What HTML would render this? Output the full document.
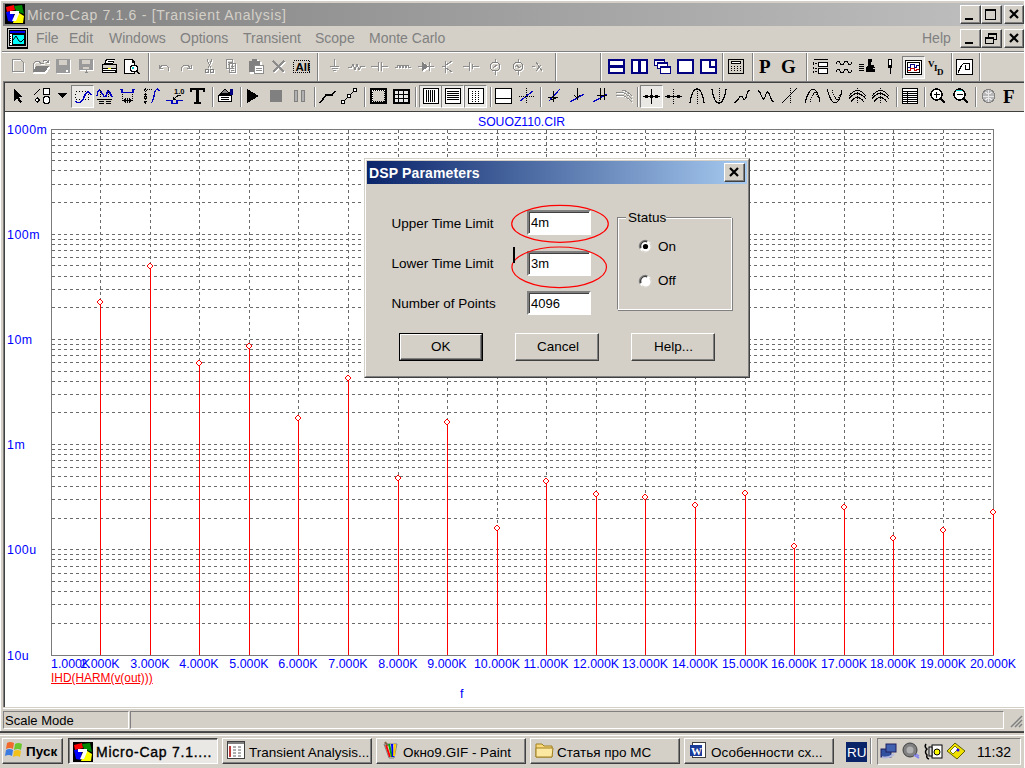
<!DOCTYPE html><html><head><meta charset="utf-8"><style>
*{margin:0;padding:0;box-sizing:border-box}
body{width:1025px;height:768px;overflow:hidden;background:#D4D0C8;position:relative;font-family:"Liberation Sans",sans-serif}
.ab{position:absolute}
.t{position:absolute;white-space:nowrap;line-height:1}
svg{position:absolute;overflow:visible}
.raised{border-style:solid;border-width:1px;border-color:#fff #404040 #404040 #fff;box-shadow:inset -1px -1px #808080}
.sunk{border-style:solid;border-width:1px;border-color:#808080 #fff #fff #808080;box-shadow:inset 1px 1px #404040, inset -1px -1px #D4D0C8}
</style></head><body>

<div class="ab" style="left:0;top:0;width:1025px;height:1px;background:#fff"></div>
<div class="ab" style="left:0;top:0;width:1px;height:731px;background:#fff"></div>
<div class="ab" style="left:3px;top:3px;width:1020px;height:23px;background:linear-gradient(to right,#808080,#C0C0C0)"></div>
<div class="t" style="left:27px;top:8.2px;font-size:14px;letter-spacing:0.7px;color:#D4D0C8">Micro-Cap 7.1.6 - [Transient Analysis]</div>
<svg class="ab" style="left:5px;top:4px" width="20" height="20" viewBox="0 0 20 20">
<rect x="0" y="0" width="20" height="20" fill="#000"/>
<polygon points="1,3 9,1 10,6 2,8" fill="#f00"/>
<polygon points="9,2 17,1 19,10 11,7" fill="#080"/>
<polygon points="1,8 9,7 8,18 3,17" fill="#00f"/>
<polygon points="11,7 19,12 18,19 8,19" fill="#ff0"/>
<polygon points="5,7 14,7 14,10 11,17 7,17 10,10 5,10" fill="#fff"/>
</svg>
<div class="ab raised" style="left:960px;top:5px;width:21px;height:19px;background:#D4D0C8"></div><div class="ab" style="left:965px;top:18px;width:8px;height:2px;background:#000"></div>
<div class="ab raised" style="left:981px;top:5px;width:21px;height:19px;background:#D4D0C8"></div><div class="ab" style="left:985px;top:9px;width:11px;height:11px;border:1px solid #000;border-top-width:2px"></div>
<div class="ab raised" style="left:1004px;top:5px;width:20px;height:19px;background:#D4D0C8"></div><svg style="left:1009px;top:9px" width="12" height="11"><path d="M1 1L9 9M9 1L1 9" stroke="#000" stroke-width="2.2"/></svg>
<svg class="ab" style="left:7px;top:28px" width="21" height="21" viewBox="0 0 21 21" shape-rendering="crispEdges">
<rect x="0" y="0" width="21" height="21" fill="#000"/>
<rect x="1" y="1" width="19" height="18" fill="#C8C8C8"/>
<rect x="2" y="2" width="17" height="16" fill="#000"/>
<rect x="3" y="3" width="15" height="2" fill="#0000F0"/>
<rect x="3" y="6" width="2" height="11" fill="#fff"/>
<path d="M3 8h1M3 10h1M3 12h1M3 14h1" stroke="#000"/>
<rect x="6" y="7" width="11" height="9" fill="#0ff"/>
<path d="M6 12L9 8L12 13L14 14L17 11" stroke="#000" fill="none" shape-rendering="auto"/>
</svg>
<div class="t" style="left:36px;top:31px;font-size:14px;color:#808080">File</div>
<div class="t" style="left:69px;top:31px;font-size:14px;color:#808080">Edit</div>
<div class="t" style="left:109px;top:31px;font-size:14px;color:#808080">Windows</div>
<div class="t" style="left:180px;top:31px;font-size:14px;color:#808080">Options</div>
<div class="t" style="left:243px;top:31px;font-size:14px;color:#808080">Transient</div>
<div class="t" style="left:315px;top:31px;font-size:14px;color:#808080">Scope</div>
<div class="t" style="left:369px;top:31px;font-size:14px;color:#808080">Monte Carlo</div>
<div class="t" style="left:922px;top:31px;font-size:14px;color:#808080">Help</div>
<div class="ab raised" style="left:960px;top:29px;width:21px;height:19px;background:#D4D0C8"></div><div class="ab" style="left:965px;top:42px;width:8px;height:2px;background:#000"></div>
<div class="ab raised" style="left:981px;top:29px;width:21px;height:19px;background:#D4D0C8"></div><div class="ab" style="left:988px;top:33px;width:9px;height:7px;border:1px solid #000;border-top-width:2px"></div><div class="ab" style="left:985px;top:37px;width:9px;height:7px;border:1px solid #000;border-top-width:2px;background:#D4D0C8"></div>
<div class="ab raised" style="left:1004px;top:29px;width:20px;height:19px;background:#D4D0C8"></div><svg style="left:1009px;top:33px" width="12" height="11"><path d="M1 1L9 9M9 1L1 9" stroke="#000" stroke-width="2.2"/></svg>
<div class="ab" style="left:2px;top:51px;width:1023px;height:1px;background:#808080"></div>
<div class="ab" style="left:2px;top:52px;width:1023px;height:1px;background:#fff"></div>
<div class="ab" style="left:3px;top:81px;width:1022px;height:1px;background:#808080"></div>
<div class="ab" style="left:4px;top:82px;width:1021px;height:1px;background:#404040"></div>
<div class="ab" style="left:3px;top:81px;width:1px;height:626px;background:#808080"></div>
<div class="ab" style="left:4px;top:82px;width:1px;height:625px;background:#404040"></div>
<div class="ab" style="left:5px;top:111px;width:1020px;height:1px;background:#404040"></div>
<div class="ab" style="left:5px;top:112px;width:1020px;height:595px;background:#fff"></div>
<div class="ab" style="left:3px;top:708px;width:1022px;height:1px;background:#fff"></div>
<div class="ab" style="left:148px;top:53px;width:1px;height:28px;background:#808080"></div><div class="ab" style="left:149px;top:53px;width:1px;height:28px;background:#fff"></div>
<div class="ab" style="left:317px;top:53px;width:1px;height:28px;background:#808080"></div><div class="ab" style="left:318px;top:53px;width:1px;height:28px;background:#fff"></div>
<div class="ab" style="left:555px;top:53px;width:1px;height:28px;background:#808080"></div><div class="ab" style="left:556px;top:53px;width:1px;height:28px;background:#fff"></div>
<div class="ab" style="left:600px;top:53px;width:1px;height:28px;background:#808080"></div><div class="ab" style="left:601px;top:53px;width:1px;height:28px;background:#fff"></div>
<div class="ab" style="left:722px;top:53px;width:1px;height:28px;background:#808080"></div><div class="ab" style="left:723px;top:53px;width:1px;height:28px;background:#fff"></div>
<div class="ab" style="left:752px;top:53px;width:1px;height:28px;background:#808080"></div><div class="ab" style="left:753px;top:53px;width:1px;height:28px;background:#fff"></div>
<div class="ab" style="left:806px;top:53px;width:1px;height:28px;background:#808080"></div><div class="ab" style="left:807px;top:53px;width:1px;height:28px;background:#fff"></div>
<div class="ab" style="left:951px;top:53px;width:1px;height:28px;background:#808080"></div><div class="ab" style="left:952px;top:53px;width:1px;height:28px;background:#fff"></div>
<div class="ab" style="left:979px;top:53px;width:1px;height:28px;background:#808080"></div><div class="ab" style="left:980px;top:53px;width:1px;height:28px;background:#fff"></div>
<div class="ab" style="left:212px;top:87px;width:1px;height:20px;background:#808080"></div><div class="ab" style="left:213px;top:87px;width:1px;height:20px;background:#fff"></div>
<div class="ab" style="left:240px;top:87px;width:1px;height:20px;background:#808080"></div><div class="ab" style="left:241px;top:87px;width:1px;height:20px;background:#fff"></div>
<div class="ab" style="left:314px;top:87px;width:1px;height:20px;background:#808080"></div><div class="ab" style="left:315px;top:87px;width:1px;height:20px;background:#fff"></div>
<div class="ab" style="left:364px;top:87px;width:1px;height:20px;background:#808080"></div><div class="ab" style="left:365px;top:87px;width:1px;height:20px;background:#fff"></div>
<div class="ab" style="left:415px;top:87px;width:1px;height:20px;background:#808080"></div><div class="ab" style="left:416px;top:87px;width:1px;height:20px;background:#fff"></div>
<div class="ab" style="left:490px;top:87px;width:1px;height:20px;background:#808080"></div><div class="ab" style="left:491px;top:87px;width:1px;height:20px;background:#fff"></div>
<div class="ab" style="left:540px;top:87px;width:1px;height:20px;background:#808080"></div><div class="ab" style="left:541px;top:87px;width:1px;height:20px;background:#fff"></div>
<div class="ab" style="left:637px;top:87px;width:1px;height:20px;background:#808080"></div><div class="ab" style="left:638px;top:87px;width:1px;height:20px;background:#fff"></div>
<div class="ab" style="left:896px;top:87px;width:1px;height:20px;background:#808080"></div><div class="ab" style="left:897px;top:87px;width:1px;height:20px;background:#fff"></div>
<div class="ab" style="left:924px;top:87px;width:1px;height:20px;background:#808080"></div><div class="ab" style="left:925px;top:87px;width:1px;height:20px;background:#fff"></div>
<div class="ab" style="left:975px;top:87px;width:1px;height:20px;background:#808080"></div><div class="ab" style="left:976px;top:87px;width:1px;height:20px;background:#fff"></div>
<svg style="left:12px;top:59px" width="14" height="15" viewBox="0 0 14 15" shape-rendering="crispEdges"><g transform="translate(1,1)" fill="#fff" stroke="#fff"><path d="M0.5 0.5H8.5L11.5 3.5V12.5H0.5Z" fill="none" stroke="#fff" stroke-width="1"/></g><g><path d="M0.5 0.5H8.5L11.5 3.5V12.5H0.5Z" fill="none" stroke="#8C8C8C" stroke-width="1"/></g></svg>
<svg style="left:33px;top:59px" width="17" height="15" viewBox="0 0 17 15" shape-rendering="crispEdges"><g transform="translate(1,1)" fill="#fff" stroke="#fff"><path d="M0.5 12.5V4.5l2-2h4l1 2h3" fill="none" stroke="#fff" stroke-width="1"/><path d="M3 7h13l-4 6H0z" fill="#fff"/><path d="M10 2.5Q12 0 15 2.5M15 1v2h-2" fill="none" stroke="#fff" stroke-width="1"/></g><g><path d="M0.5 12.5V4.5l2-2h4l1 2h3" fill="none" stroke="#8C8C8C" stroke-width="1"/><path d="M3 7h13l-4 6H0z" fill="#808080"/><path d="M10 2.5Q12 0 15 2.5M15 1v2h-2" fill="none" stroke="#8C8C8C" stroke-width="1"/></g></svg>
<svg style="left:56px;top:59px" width="15" height="15" viewBox="0 0 15 15" shape-rendering="crispEdges"><path d="M1 1h14v14H1z" fill="#fff"/><path d="M0 0h14v14H0z" fill="#9A9A9A"/><path d="M3 1h8v5H3z" fill="#D4D0C8"/><path d="M10 11h2v2h-2z" fill="#fff"/></svg>
<svg style="left:79px;top:59px" width="16" height="16" viewBox="0 0 16 16" shape-rendering="crispEdges"><path d="M1 1h14v11H1z" fill="#fff"/><path d="M0 0h14v11H0z" fill="#9A9A9A"/><path d="M3 1h8v4H3z" fill="#D4D0C8"/><path d="M4 8h6v2H4z" fill="#D4D0C8"/><path d="M7 11v3M5.5 13.5h3" fill="none" stroke="#8C8C8C" stroke-width="1"/></svg>
<svg style="left:101px;top:59px" width="17" height="15" viewBox="0 0 17 15" shape-rendering="crispEdges"><path d="M5 0h9l-2 5H3z" fill="#000"/><path d="M6 1h7l-1 3H5z" fill="#fff"/><path d="M6.5 2.5h5" fill="none" stroke="#000" stroke-width="1"/><path d="M1 5h15v9H1z" fill="#000"/><path d="M2 6h13v3H2z" fill="#D4D0C8"/><path d="M2 10h13v1H2z" fill="#fff"/><path d="M7 9h3v1H7z" fill="#ff0"/><path d="M2 12h12v1H2z" fill="#fff"/></svg>
<svg style="left:124px;top:59px" width="17" height="16" viewBox="0 0 17 16" shape-rendering="crispEdges"><path d="M0 0h8l3 3v12H0z" fill="#000"/><path d="M1 1h7v3h2v10H1z" fill="#fff"/><circle cx="10" cy="9.5" r="3.5" fill="#fff" stroke="#000"/><path d="M8 8h2v2H8z" fill="#0cc"/><path d="M12.5 12l3 3" fill="none" stroke="#000" stroke-width="2"/></svg>
<svg style="left:157px;top:62px" width="14" height="11" viewBox="0 0 14 11" shape-rendering="crispEdges"><g transform="translate(1,1)" fill="#fff" stroke="#fff"><path d="M2 2.5v4h4 M2.5 6.5Q5 2 9 3.5Q13 5 11 9" fill="none" stroke="#fff" stroke-width="1"/></g><g><path d="M2 2.5v4h4 M2.5 6.5Q5 2 9 3.5Q13 5 11 9" fill="none" stroke="#8C8C8C" stroke-width="1"/></g></svg>
<svg style="left:180px;top:62px" width="14" height="11" viewBox="0 0 14 11" shape-rendering="crispEdges"><g transform="translate(1,1)" fill="#fff" stroke="#fff"><path d="M11 2.5v4h-4 M10.5 6.5Q8 2 4 3.5Q0 5 2 9" fill="none" stroke="#fff" stroke-width="1"/></g><g><path d="M11 2.5v4h-4 M10.5 6.5Q8 2 4 3.5Q0 5 2 9" fill="none" stroke="#8C8C8C" stroke-width="1"/></g></svg>
<svg style="left:204px;top:59px" width="12" height="16" viewBox="0 0 12 16" shape-rendering="crispEdges"><g transform="translate(1,1)" fill="#fff" stroke="#fff"><path d="M3 0.5L7 9M8 0.5L4 9" fill="none" stroke="#fff" stroke-width="1"/><circle cx="3" cy="12" r="2" fill="none" stroke="#fff"/><circle cx="8" cy="12" r="2" fill="none" stroke="#fff"/></g><g><path d="M3 0.5L7 9M8 0.5L4 9" fill="none" stroke="#8C8C8C" stroke-width="1"/><circle cx="3" cy="12" r="2" fill="none" stroke="#808080"/><circle cx="8" cy="12" r="2" fill="none" stroke="#808080"/></g></svg>
<svg style="left:226px;top:59px" width="16" height="16" viewBox="0 0 16 16" shape-rendering="crispEdges"><g transform="translate(1,1)" fill="#fff" stroke="#fff"><path d="M0.5 0.5h6v9h-6z M3.5 4.5h6v9h-6z M1.5 3h4M1.5 5h1 M5 7h3M5 9h3M5 11h3" fill="none" stroke="#fff" stroke-width="1"/></g><g><path d="M0.5 0.5h6v9h-6z M3.5 4.5h6v9h-6z M1.5 3h4M1.5 5h1 M5 7h3M5 9h3M5 11h3" fill="none" stroke="#8C8C8C" stroke-width="1"/></g></svg>
<svg style="left:249px;top:59px" width="17" height="16" viewBox="0 0 17 16" shape-rendering="crispEdges"><g transform="translate(1,1)" fill="#fff" stroke="#fff"><path d="M0 2h11v11H0z" fill="#fff"/><path d="M3 0h5v3H3z" fill="#fff"/></g><g><path d="M0 2h11v11H0z" fill="#808080"/><path d="M3 0h5v3H3z" fill="#808080"/></g><path d="M6 7h9v8H6z" fill="#fff"/><path d="M5.5 6.5h9v8h-9z M7 9h6M7 11h6" fill="none" stroke="#8C8C8C" stroke-width="1"/></svg>
<svg style="left:272px;top:60px" width="14" height="14" viewBox="0 0 14 14" shape-rendering="crispEdges"><g transform="translate(1,1)" fill="#fff" stroke="#fff"><path d="M1 1L12 12M12 1L1 12" fill="none" stroke="#fff" stroke-width="1.6"/></g><g><path d="M1 1L12 12M12 1L1 12" fill="none" stroke="#8C8C8C" stroke-width="1.6"/></g></svg>
<svg style="left:293px;top:60px" width="18" height="14" viewBox="0 0 18 14" shape-rendering="crispEdges"><rect x="0.5" y="0.5" width="16" height="12" fill="none" stroke="#000" stroke-dasharray="1 1"/><text x="2.5" y="11" font-family="Liberation Sans" font-weight="bold" font-size="11.5" fill="#000">All</text></svg>
<svg style="left:330px;top:59px" width="10" height="16" viewBox="0 0 10 16" shape-rendering="crispEdges"><g transform="translate(1,1)" fill="#fff" stroke="#fff"><path d="M4.5 0v7M0 7.5h9M1.5 9.5h6M3 11.5h3" fill="none" stroke="#fff" stroke-width="1"/></g><g><path d="M4.5 0v7M0 7.5h9M1.5 9.5h6M3 11.5h3" fill="none" stroke="#8C8C8C" stroke-width="1"/></g></svg>
<svg style="left:348px;top:59px" width="18" height="16" viewBox="0 0 18 16" shape-rendering="crispEdges"><g transform="translate(1,1)" fill="#fff" stroke="#fff"><path d="M0 8.5h3l2-3 2 5 2-5 2 5 2-3h4" fill="none" stroke="#fff" stroke-width="1"/></g><g><path d="M0 8.5h3l2-3 2 5 2-5 2 5 2-3h4" fill="none" stroke="#8C8C8C" stroke-width="1"/></g></svg>
<svg style="left:371px;top:59px" width="18" height="16" viewBox="0 0 18 16" shape-rendering="crispEdges"><g transform="translate(1,1)" fill="#fff" stroke="#fff"><path d="M0 7.5h7M7.5 3v9M10.5 3v9M11 7.5h6" fill="none" stroke="#fff" stroke-width="1"/></g><g><path d="M0 7.5h7M7.5 3v9M10.5 3v9M11 7.5h6" fill="none" stroke="#8C8C8C" stroke-width="1"/></g></svg>
<svg style="left:395px;top:59px" width="16" height="16" viewBox="0 0 16 16" shape-rendering="crispEdges"><g transform="translate(1,1)" fill="#fff" stroke="#fff"><path d="M0 8.5h2 Q3.5 4 5 8.5 Q6.5 4 8 8.5 Q9.5 4 11 8.5 Q12.5 4 14 8.5h2" fill="none" stroke="#fff" stroke-width="1"/></g><g><path d="M0 8.5h2 Q3.5 4 5 8.5 Q6.5 4 8 8.5 Q9.5 4 11 8.5 Q12.5 4 14 8.5h2" fill="none" stroke="#8C8C8C" stroke-width="1"/></g></svg>
<svg style="left:418px;top:59px" width="16" height="16" viewBox="0 0 16 16" shape-rendering="crispEdges"><g transform="translate(1,1)" fill="#fff" stroke="#fff"><path d="M0 7.5h16M11.5 3v9" fill="none" stroke="#fff" stroke-width="1"/><path d="M4 3L11 7.5L4 12Z" fill="#fff"/></g><g><path d="M0 7.5h16M11.5 3v9" fill="none" stroke="#8C8C8C" stroke-width="1"/><path d="M4 3L11 7.5L4 12Z" fill="#808080"/></g></svg>
<svg style="left:442px;top:59px" width="12" height="16" viewBox="0 0 12 16" shape-rendering="crispEdges"><g transform="translate(1,1)" fill="#fff" stroke="#fff"><path d="M3.5 2v12M0 7.5h3M4 6l6-4M4 9l6 4" fill="none" stroke="#fff" stroke-width="1"/></g><g><path d="M3.5 2v12M0 7.5h3M4 6l6-4M4 9l6 4" fill="none" stroke="#8C8C8C" stroke-width="1"/></g></svg>
<svg style="left:463px;top:59px" width="17" height="16" viewBox="0 0 17 16" shape-rendering="crispEdges"><g transform="translate(1,1)" fill="#fff" stroke="#fff"><path d="M0 7.5h6M6.5 3v9M9.5 5v5M10 7.5h6" fill="none" stroke="#fff" stroke-width="1"/></g><g><path d="M0 7.5h6M6.5 3v9M9.5 5v5M10 7.5h6" fill="none" stroke="#8C8C8C" stroke-width="1"/></g></svg>
<svg style="left:489px;top:59px" width="12" height="16" viewBox="0 0 12 16" shape-rendering="crispEdges"><g transform="translate(1,1)" fill="#fff" stroke="#fff"><circle cx="6" cy="7.5" r="4.5" fill="none" stroke="#fff"/><path d="M6 0v3M6 12v4M4 9l4-3" fill="none" stroke="#fff" stroke-width="1"/></g><g><circle cx="6" cy="7.5" r="4.5" fill="none" stroke="#808080"/><path d="M6 0v3M6 12v4M4 9l4-3" fill="none" stroke="#8C8C8C" stroke-width="1"/></g></svg>
<svg style="left:512px;top:59px" width="12" height="16" viewBox="0 0 12 16" shape-rendering="crispEdges"><g transform="translate(1,1)" fill="#fff" stroke="#fff"><circle cx="6" cy="7.5" r="4.5" fill="none" stroke="#fff"/><path d="M6 0v3M6 12v4M3.5 8Q5 5 6 7.5Q7 10 8.5 7" fill="none" stroke="#fff" stroke-width="1"/></g><g><circle cx="6" cy="7.5" r="4.5" fill="none" stroke="#808080"/><path d="M6 0v3M6 12v4M3.5 8Q5 5 6 7.5Q7 10 8.5 7" fill="none" stroke="#8C8C8C" stroke-width="1"/></g></svg>
<svg style="left:532px;top:59px" width="12" height="16" viewBox="0 0 12 16" shape-rendering="crispEdges"><g transform="translate(1,1)" fill="#fff" stroke="#fff"><path d="M0 7.5h3M4 3l6 9M4 12l5-6" fill="none" stroke="#fff" stroke-width="1"/></g><g><path d="M0 7.5h3M4 3l6 9M4 12l5-6" fill="none" stroke="#8C8C8C" stroke-width="1"/></g></svg>
<svg style="left:608px;top:59px" width="17" height="15" viewBox="0 0 17 15" shape-rendering="crispEdges"><path d="M0 0h17v15H0z" fill="#000080"/><path d="M2 2h13v11H2z" fill="#fff"/><path d="M2 6h13v3H2z" fill="#000080"/></svg>
<svg style="left:631px;top:59px" width="17" height="15" viewBox="0 0 17 15" shape-rendering="crispEdges"><path d="M0 0h17v15H0z" fill="#000080"/><path d="M2 2h13v11H2z" fill="#fff"/><path d="M7 2h3v11H7z" fill="#000080"/></svg>
<svg style="left:654px;top:59px" width="17" height="15" viewBox="0 0 17 15" shape-rendering="crispEdges"><path d="M0 0h11v7H0z" fill="#000080"/><path d="M1 2h9v4H1z" fill="#fff"/><path d="M3 3h11v7H3z" fill="#000080"/><path d="M4 5h9v4H4z" fill="#fff"/><path d="M6 7h11v8H6z" fill="#000080"/><path d="M7 9h9v5H7z" fill="#fff"/></svg>
<svg style="left:677px;top:59px" width="17" height="15" viewBox="0 0 17 15" shape-rendering="crispEdges"><path d="M0 0h17v15H0z" fill="#000080"/><path d="M2 2h13v11H2z" fill="#fff"/></svg>
<svg style="left:700px;top:59px" width="17" height="15" viewBox="0 0 17 15" shape-rendering="crispEdges"><path d="M0 0h17v15H0z" fill="#000080"/><path d="M2 2h13v11H2z" fill="#fff"/><path d="M9 7h6v2H9z M9 2h2v7H9z" fill="#000080"/></svg>
<svg style="left:728px;top:59px" width="16" height="15" viewBox="0 0 16 15" shape-rendering="crispEdges"><path d="M0 0h16v15H0z" fill="#000"/><path d="M1 1h14v13H1z" fill="#D4D0C8"/><path d="M3 2h10v3H3z" fill="#000"/><path d="M4 3h8v1H4z" fill="#fff"/><path d="M3 7.5h1M6 7.5h1M9 7.5h1M12 7.5h1M3 9.5h1M6 9.5h1M9 9.5h1M12 9.5h1M3 11.5h1M6 11.5h1M9 11.5h1M12 11.5h1" fill="none" stroke="#000" stroke-width="1"/></svg>
<svg style="left:758px;top:58px" width="16" height="17" viewBox="0 0 16 17" shape-rendering="crispEdges"><text x="1" y="15" font-family="Liberation Serif" font-weight="bold" font-size="19" fill="#000">P</text></svg>
<svg style="left:780px;top:58px" width="17" height="17" viewBox="0 0 17 17" shape-rendering="crispEdges"><text x="1" y="15" font-family="Liberation Serif" font-weight="bold" font-size="19" fill="#000">G</text></svg>
<svg style="left:813px;top:59px" width="16" height="15" viewBox="0 0 16 15" shape-rendering="crispEdges"><path d="M1 0.5h14" fill="none" stroke="#000" stroke-width="1"/><path d="M0.5 3v3M0.5 8v2M0.5 12v2" fill="none" stroke="#000" stroke-width="1"/><path d="M5 3h10v5H5z" fill="#000"/><path d="M6 4h8v3H6z" fill="#fff"/><path d="M5 9h10v6H5z" fill="#000"/><path d="M6 10h8v4H6z" fill="#fff"/><path d="M2 4.5h2M2 9.5h2M2 12.5h2" fill="none" stroke="#000" stroke-width="1"/></svg>
<svg style="left:836px;top:59px" width="17" height="15" viewBox="0 0 17 15" shape-rendering="crispEdges"><path d="M0 5 Q2 0 4 4 Q6 8 8 4 Q10 0 12 4 Q14 8 16 3 M0 13 Q2 8 4 12 Q6 16 8 12 Q10 8 12 12 Q14 16 16 11" fill="none" stroke="#000" stroke-width="1"/></svg>
<svg style="left:859px;top:59px" width="16" height="15" viewBox="0 0 16 15" shape-rendering="crispEdges"><path d="M9 0h4v3h-1v3h3l1 3h-2v1h2v3H7V8l2-2z" fill="#000"/><path d="M0 5.5h5M0 7.5h5M0 9.5h5M0 11.5h5" fill="none" stroke="#000" stroke-width="1"/></svg>
<svg style="left:886px;top:59px" width="8" height="15" viewBox="0 0 8 15" shape-rendering="crispEdges"><path d="M2 0h4v9H2z" fill="#000"/><path d="M3 1h2v5H3z" fill="#fff"/><path d="M4 9v6" fill="none" stroke="#000" stroke-width="1"/></svg>
<div class="ab" style="left:902px;top:56px;width:23px;height:23px;background:#EAE8E4;border:1px solid;border-color:#808080 #fff #fff #808080"></div>
<svg style="left:905px;top:60px" width="17" height="15" viewBox="0 0 17 15" shape-rendering="crispEdges"><path d="M0 0h17v15H0z" fill="#000"/><path d="M1 1h15v13H1z" fill="#fff"/><path d="M2 2h13v11H2z" fill="#000"/><path d="M3 3h11v9H3z" fill="#fff"/><path d="M3 7.5h2v-3h4v3h2v-2h3" fill="none" stroke="#000080" stroke-width="1"/><path d="M3 10.5h2v-2h4v2h2v-1h3" fill="none" stroke="#c00000" stroke-width="1"/></svg>
<svg style="left:928px;top:59px" width="18" height="16" viewBox="0 0 18 16" shape-rendering="crispEdges"><text x="0" y="8" font-family="Liberation Serif" font-weight="bold" font-size="9" fill="#000">V</text><text x="6" y="12" font-family="Liberation Serif" font-weight="bold" font-size="9" fill="#000">I</text><text x="9" y="16" font-family="Liberation Serif" font-weight="bold" font-size="9" fill="#000">D</text></svg>
<svg style="left:956px;top:59px" width="17" height="16" viewBox="0 0 17 16" shape-rendering="crispEdges"><path d="M0 0h17v16H0z" fill="#000"/><path d="M1 1h15v14H1z" fill="#fff"/><path d="M2 14Q5 6 8 4.5H13v6H9v-5" fill="none" stroke="#000" stroke-width="1"/></svg>
<svg style="left:14px;top:89px" width="10" height="14" viewBox="0 0 10 14" shape-rendering="crispEdges"><path d="M0 0L9 8H5L8 13L6 14L3 9L0 12Z" fill="#000"/></svg>
<svg style="left:33px;top:88px" width="18" height="16" viewBox="0 0 18 16" shape-rendering="crispEdges"><path d="M0.5 7.5L7 1" fill="none" stroke="#000" stroke-width="1"/><path d="M10 0h7v7h-7z" fill="#000"/><path d="M11 1h5v5h-5z" fill="#fff"/><path d="M4 9L7 12L4 15L1 12Z" fill="#000"/><path d="M4 10.5L5.5 12L4 13.5L2.5 12Z" fill="#fff"/><circle cx="13.5" cy="12" r="3.5" fill="#fff" stroke="#000"/></svg>
<svg style="left:58px;top:93px" width="10" height="6" viewBox="0 0 10 6" shape-rendering="crispEdges"><path d="M0 0h9L4.5 5z" fill="#000"/></svg>
<div class="ab" style="left:71px;top:85px;width:23px;height:23px;background:#EAE8E4;border:1px solid;border-color:#808080 #fff #fff #808080"></div>
<svg style="left:74px;top:88px" width="18" height="16" viewBox="0 0 18 16" shape-rendering="crispEdges"><rect x="1.5" y="3.5" width="13" height="8" fill="none" stroke="#000" stroke-dasharray="1 2"/><path d="M1 13Q4 16 7 14Q9 12 11 7Q13 3 15 4Q16 5 17 7" fill="none" stroke="#0000C0" stroke-width="1.4"/></svg>
<svg style="left:96px;top:88px" width="17" height="16" viewBox="0 0 17 16" shape-rendering="crispEdges"><path d="M1 8Q2 1 4 2Q5 3 7 7Q8 9 10 8Q12 1 13 3Q14 5 16 9" fill="none" stroke="#0000C0" stroke-width="1.4"/><path d="M4.5 2v7M12.5 2v7" stroke="#000" stroke-dasharray="1 1"/><path d="M1 11.5h15M3 13.5h5M10 13.5h5M3 15.5h5M10 15.5h5" fill="none" stroke="#000" stroke-width="1"/></svg>
<svg style="left:119px;top:88px" width="17" height="16" viewBox="0 0 17 16" shape-rendering="crispEdges"><path d="M1 1.5h2v3h11v-3h2" fill="none" stroke="#0000C0" stroke-width="1.2"/><path d="M3.5 6v8M13.5 6v8" stroke="#000" stroke-dasharray="1 1"/><path d="M3 12.5h11M5 12.5l2-2M5 12.5l2 2M12 12.5l-2-2M12 12.5l-2 2M8.5 10v5" fill="none" stroke="#000" stroke-width="1"/></svg>
<svg style="left:143px;top:88px" width="17" height="16" viewBox="0 0 17 16" shape-rendering="crispEdges"><path d="M2.5 1v14M4 1.5h6" stroke="#000" stroke-dasharray="1 1"/><path d="M1 3l1.5-2 1.5 2M1 13l1.5 2 1.5-2" fill="none" stroke="#000" stroke-width="1"/><path d="M1 6h3v1H1zM1 8h3v3H1z" fill="#000"/><path d="M2 9h1v1H2z" fill="#D4D0C8"/><path d="M8 15Q10 14 11 8Q12 2 14 1Q16 1 16 3" fill="none" stroke="#0000C0" stroke-width="1.3"/></svg>
<svg style="left:166px;top:88px" width="17" height="16" viewBox="0 0 17 16" shape-rendering="crispEdges"><text x="8" y="6" font-size="7.5" font-weight="bold" font-family="Liberation Sans" fill="#000">1.0</text><path d="M0 12.5h6v3h5v-3h6" fill="none" stroke="#0000C0" stroke-width="1.2"/><path d="M15 7.5h-3L7 11.5M7 11.5h3M7 11.5v-3" fill="none" stroke="#000" stroke-width="1"/></svg>
<svg style="left:190px;top:88px" width="16" height="16" viewBox="0 0 16 16" shape-rendering="crispEdges"><path d="M0 0h15v4h-2v-2h-4v12h2v2H4v-2h2V2H2v2H0z" fill="#000"/></svg>
<svg style="left:217px;top:89px" width="17" height="15" viewBox="0 0 17 15" shape-rendering="crispEdges"><path d="M1 6L8 0L11 3L15 3V13H1Z" fill="#000"/><path d="M2 7h12v5H2z" fill="#fff"/><path d="M4 8.5h8M4 10.5h8" fill="none" stroke="#000" stroke-width="1"/><path d="M4 4L8 1L11 4Z" fill="#808080"/><path d="M13 0h3v6h-3z" fill="#000080"/></svg>
<svg style="left:246px;top:88px" width="14" height="16" viewBox="0 0 14 16" shape-rendering="crispEdges"><path d="M1 1L13 8L1 15z" fill="#000"/></svg>
<svg style="left:270px;top:90px" width="13" height="12" viewBox="0 0 13 12" shape-rendering="crispEdges"><path d="M0 0h12v12H0z" fill="#808080"/></svg>
<svg style="left:293px;top:90px" width="13" height="12" viewBox="0 0 13 12" shape-rendering="crispEdges"><path d="M1 0h4v12H1zM8 0h4v12H8z" fill="#808080"/><path d="M2 1h2v10H2zM9 1h2v10H9z" fill="#B0B0B0"/></svg>
<svg style="left:319px;top:88px" width="17" height="16" viewBox="0 0 17 16" shape-rendering="crispEdges"><path d="M1 15L7 7H13L16 3" fill="none" stroke="#000" stroke-width="1.5"/></svg>
<svg style="left:341px;top:88px" width="17" height="16" viewBox="0 0 17 16" shape-rendering="crispEdges"><path d="M2 14L8 8L14 2" fill="none" stroke="#000" stroke-width="1.2"/><rect x="0.5" y="12.5" width="3" height="3" fill="#fff" stroke="#000"/><rect x="6.5" y="6.5" width="3" height="3" fill="#fff" stroke="#000"/><rect x="12.5" y="0.5" width="3" height="3" fill="#fff" stroke="#000"/></svg>
<svg style="left:370px;top:88px" width="17" height="16" viewBox="0 0 17 16" shape-rendering="crispEdges"><rect x="0.5" y="0.5" width="16" height="15" fill="#fff" stroke="#000"/><rect x="1.5" y="1.5" width="14" height="13" fill="none" stroke="#000"/><rect x="2.5" y="2.5" width="12" height="11" fill="#D4D0C8" stroke="#000" stroke-dasharray="1 1"/></svg>
<svg style="left:393px;top:89px" width="17" height="15" viewBox="0 0 17 15" shape-rendering="crispEdges"><path d="M0 0h17v15H0z" fill="#000"/><path d="M2 2h13v11H2z" fill="#E8E8E8"/><path d="M2 5.5h13M2 9.5h13M5.5 2v11M10.5 2v11" fill="none" stroke="#000" stroke-width="1"/><path d="M5 4h1v3H5zM4 5h3v1H4zM10 4h1v3h-1zM9 5h3v1H9zM5 8h1v3H5zM4 9h3v1H4zM10 8h1v3h-1zM9 9h3v1H9z" fill="#000"/></svg>
<div class="ab" style="left:419px;top:85px;width:23px;height:23px;background:#EAE8E4;border:1px solid;border-color:#808080 #fff #fff #808080"></div>
<div class="ab" style="left:441px;top:85px;width:23px;height:23px;background:#EAE8E4;border:1px solid;border-color:#808080 #fff #fff #808080"></div>
<div class="ab" style="left:464px;top:85px;width:23px;height:23px;background:#EAE8E4;border:1px solid;border-color:#808080 #fff #fff #808080"></div>
<svg style="left:423px;top:88px" width="16" height="16" viewBox="0 0 16 16" shape-rendering="crispEdges"><path d="M0 0h16v16H0z" fill="#000"/><path d="M1 1h14v14H1z" fill="#fff"/><path d="M3.5 2v12M5.5 2v12M7.5 2v12M9.5 2v12M11.5 2v12" fill="none" stroke="#000" stroke-width="1"/></svg>
<svg style="left:445px;top:88px" width="16" height="16" viewBox="0 0 16 16" shape-rendering="crispEdges"><path d="M0 0h16v16H0z" fill="#000"/><path d="M1 1h14v14H1z" fill="#fff"/><path d="M2 3.5h12M2 5.5h12M2 7.5h12M2 9.5h12M2 11.5h12" fill="none" stroke="#000" stroke-width="1"/></svg>
<svg style="left:468px;top:88px" width="16" height="16" viewBox="0 0 16 16" shape-rendering="crispEdges"><path d="M0 0h16v16H0z" fill="#000"/><path d="M1 1h14v14H1z" fill="#fff"/><path d="M4.5 3v11M7.5 3v11M10.5 3v11" stroke="#000" stroke-dasharray="1 1"/></svg>
<svg style="left:495px;top:88px" width="17" height="16" viewBox="0 0 17 16" shape-rendering="crispEdges"><path d="M0 0h17v16H0z" fill="#000"/><path d="M1 1h15v14H1z" fill="#fff"/><path d="M1 10h15v1H1z" fill="#000"/></svg>
<svg style="left:519px;top:88px" width="16" height="16" viewBox="0 0 16 16" shape-rendering="crispEdges"><path d="M1 13L14 3" fill="none" stroke="#0000C0" stroke-width="1.2"/><path d="M7.5 0v16M0 8.5h16" stroke="#000" stroke-dasharray="1 1"/></svg>
<svg style="left:547px;top:88px" width="15" height="16" viewBox="0 0 15 16" shape-rendering="crispEdges"><path d="M2 13L13 1" fill="none" stroke="#0000C0" stroke-width="1.2"/><path d="M1 9.5h8M6 3v11" fill="none" stroke="#000" stroke-width="1"/><path d="M4 12l7-3" fill="none" stroke="#000" stroke-width="1"/></svg>
<svg style="left:569px;top:88px" width="16" height="16" viewBox="0 0 16 16" shape-rendering="crispEdges"><path d="M1 14L15 6" fill="none" stroke="#0000C0" stroke-width="1.2"/><path d="M8 0v12M5 7l3 3 3-3" fill="none" stroke="#000" stroke-width="1"/></svg>
<svg style="left:592px;top:88px" width="17" height="16" viewBox="0 0 17 16" shape-rendering="crispEdges"><path d="M1 14L15 6" fill="none" stroke="#0000C0" stroke-width="1.2"/><path d="M8 0v12M12 0v12M5 7h10" fill="none" stroke="#000" stroke-width="1"/></svg>
<svg style="left:616px;top:88px" width="17" height="16" viewBox="0 0 17 16" shape-rendering="crispEdges"><g transform="translate(1,1)" fill="#fff" stroke="#fff"><path d="M0 4.5h6Q10 5 16 11M0 7.5h6Q10 8 16 14M6 2Q10 2 16 8" fill="none" stroke="#fff" stroke-width="1"/></g><g><path d="M0 4.5h6Q10 5 16 11M0 7.5h6Q10 8 16 14M6 2Q10 2 16 8" fill="none" stroke="#8C8C8C" stroke-width="1"/></g></svg>
<div class="ab" style="left:640px;top:85px;width:23px;height:23px;background:#EAE8E4;border:1px solid;border-color:#808080 #fff #fff #808080"></div>
<svg style="left:643px;top:88px" width="17" height="16" viewBox="0 0 17 16" shape-rendering="crispEdges"><path d="M0 8.5h17M8.5 1v15" fill="none" stroke="#000" stroke-width="1"/><path d="M2 7h3v3H2zM7 7h3v3H7zM12 7h3v3h-3z" fill="#000"/></svg>
<svg style="left:665px;top:88px" width="17" height="16" viewBox="0 0 17 16" shape-rendering="crispEdges"><path d="M0 8.5h17" fill="none" stroke="#000" stroke-width="1"/><path d="M8.5 1v15" stroke="#000" stroke-dasharray="1 1"/><path d="M2 7h3v3H2zM12 7h3v3h-3z" fill="#000"/></svg>
<svg style="left:689px;top:88px" width="17" height="16" viewBox="0 0 17 16" shape-rendering="crispEdges"><path d="M1 15Q3 1 8 1Q13 1 15 15" fill="none" stroke="#000" stroke-width="1.2"/><path d="M8.5 3v13" stroke="#000" stroke-dasharray="1 1" fill="none"/></svg>
<svg style="left:711px;top:88px" width="17" height="16" viewBox="0 0 17 16" shape-rendering="crispEdges"><path d="M1 1Q3 15 8 15Q13 15 15 1" fill="none" stroke="#000" stroke-width="1.2"/><path d="M8.5 0v13" stroke="#000" stroke-dasharray="1 1" fill="none"/></svg>
<svg style="left:734px;top:88px" width="17" height="16" viewBox="0 0 17 16" shape-rendering="crispEdges"><path d="M0 15Q3 13 5 10Q7 6 9 10Q11 14 13 6Q14 2 16 2" fill="none" stroke="#000" stroke-width="1.2"/></svg>
<svg style="left:758px;top:88px" width="17" height="16" viewBox="0 0 17 16" shape-rendering="crispEdges"><path d="M0 2Q2 4 4 9Q6 14 8 6Q10 1 12 8Q14 14 16 14" fill="none" stroke="#000" stroke-width="1.2"/></svg>
<svg style="left:781px;top:88px" width="17" height="16" viewBox="0 0 17 16" shape-rendering="crispEdges"><path d="M1 15L16 0" fill="none" stroke="#000" stroke-width="1.2"/><path d="M9.5 0v16" stroke="#000" stroke-dasharray="1 1" fill="none"/></svg>
<svg style="left:804px;top:88px" width="17" height="16" viewBox="0 0 17 16" shape-rendering="crispEdges"><path d="M1 15Q5 1 9 1Q13 1 16 13" fill="none" stroke="#000" stroke-width="1.2"/><path d="M6 14Q9 5 11 4Q13 5 16 14" stroke="#000" stroke-dasharray="1 1" fill="none"/></svg>
<svg style="left:826px;top:88px" width="17" height="16" viewBox="0 0 17 16" shape-rendering="crispEdges"><path d="M1 1Q5 15 9 15Q13 15 16 3" fill="none" stroke="#000" stroke-width="1.2"/><path d="M6 2Q9 11 11 12Q13 11 16 2" stroke="#000" stroke-dasharray="1 1" fill="none"/></svg>
<svg style="left:849px;top:88px" width="17" height="16" viewBox="0 0 17 16" shape-rendering="crispEdges"><path d="M0 11Q8 0 17 11M2 14Q8 5 15 14" fill="none" stroke="#000" stroke-width="1.2"/><path d="M8.5 0v16" stroke="#000" stroke-dasharray="1 1" fill="none"/><path d="M0 8Q8 -3 17 8" fill="none" stroke="#000" stroke-width="1"/></svg>
<svg style="left:872px;top:88px" width="17" height="16" viewBox="0 0 17 16" shape-rendering="crispEdges"><path d="M0 11Q8 0 17 11M2 14Q8 5 15 14" fill="none" stroke="#000" stroke-width="1.2"/><path d="M8.5 0v16" stroke="#000" stroke-dasharray="1 1" fill="none"/><path d="M0 8Q8 -3 17 8" fill="none" stroke="#000" stroke-width="1"/></svg>
<svg style="left:902px;top:88px" width="16" height="16" viewBox="0 0 16 16" shape-rendering="crispEdges"><path d="M0 0h16v16H0z" fill="#000"/><path d="M1 1h14v14H1z" fill="#fff"/><path d="M1 3.5h14M1 5.5h14M1 7.5h14M1 9.5h14M1 11.5h14M1 13.5h14M5.5 3v12" fill="none" stroke="#000" stroke-width="1"/></svg>
<svg style="left:930px;top:88px" width="16" height="16" viewBox="0 0 16 16" shape-rendering="crispEdges"><circle cx="6.5" cy="6.5" r="5.5" fill="#fff" stroke="#000" stroke-width="1.5"/><path d="M6.5 3.5v6M3.5 6.5h6" fill="none" stroke="#000" stroke-width="1.5"/><path d="M10.5 10.5l4.5 4.5" fill="none" stroke="#000" stroke-width="2.5"/></svg>
<svg style="left:953px;top:88px" width="16" height="16" viewBox="0 0 16 16" shape-rendering="crispEdges"><circle cx="6.5" cy="6.5" r="5.5" fill="#fff" stroke="#000" stroke-width="1.5"/><path d="M3.5 6.5h6" fill="none" stroke="#000" stroke-width="1.5"/><path d="M10.5 10.5l4.5 4.5" fill="none" stroke="#000" stroke-width="2.5"/><path d="M3 3Q6 1 9 3" stroke="#0cc" fill="none"/></svg>
<svg style="left:981px;top:88px" width="15" height="16" viewBox="0 0 15 16" shape-rendering="crispEdges"><circle cx="7.5" cy="8" r="6.5" fill="#B8B8B8" stroke="#808080"/><path d="M2 8h11M7.5 2v12M4 4Q7.5 7 11 4M4 12Q7.5 9 11 12" stroke="#e8e8e8" fill="none"/></svg>
<svg style="left:1002px;top:87px" width="16" height="18" viewBox="0 0 16 18" shape-rendering="crispEdges"><text x="1" y="16" font-family="Liberation Serif" font-weight="bold" font-size="19" fill="#000">F</text></svg>
<svg class="ab" style="left:0;top:0" width="1025" height="768" shape-rendering="crispEdges">
<line x1="52" y1="133.5" x2="993" y2="133.5" stroke="#6A6A6A" stroke-width="1" stroke-dasharray="3 3"/>
<line x1="52" y1="139.5" x2="993" y2="139.5" stroke="#6A6A6A" stroke-width="1" stroke-dasharray="3 3"/>
<line x1="52" y1="145.5" x2="993" y2="145.5" stroke="#6A6A6A" stroke-width="1" stroke-dasharray="3 3"/>
<line x1="52" y1="152.5" x2="993" y2="152.5" stroke="#6A6A6A" stroke-width="1" stroke-dasharray="3 3"/>
<line x1="52" y1="160.5" x2="993" y2="160.5" stroke="#6A6A6A" stroke-width="1" stroke-dasharray="3 3"/>
<line x1="52" y1="170.5" x2="993" y2="170.5" stroke="#6A6A6A" stroke-width="1" stroke-dasharray="3 3"/>
<line x1="52" y1="184.5" x2="993" y2="184.5" stroke="#6A6A6A" stroke-width="1" stroke-dasharray="3 3"/>
<line x1="52" y1="202.5" x2="993" y2="202.5" stroke="#6A6A6A" stroke-width="1" stroke-dasharray="3 3"/>
<line x1="52" y1="239.5" x2="993" y2="239.5" stroke="#6A6A6A" stroke-width="1" stroke-dasharray="3 3"/>
<line x1="52" y1="244.5" x2="993" y2="244.5" stroke="#6A6A6A" stroke-width="1" stroke-dasharray="3 3"/>
<line x1="52" y1="250.5" x2="993" y2="250.5" stroke="#6A6A6A" stroke-width="1" stroke-dasharray="3 3"/>
<line x1="52" y1="257.5" x2="993" y2="257.5" stroke="#6A6A6A" stroke-width="1" stroke-dasharray="3 3"/>
<line x1="52" y1="265.5" x2="993" y2="265.5" stroke="#6A6A6A" stroke-width="1" stroke-dasharray="3 3"/>
<line x1="52" y1="276.5" x2="993" y2="276.5" stroke="#6A6A6A" stroke-width="1" stroke-dasharray="3 3"/>
<line x1="52" y1="289.5" x2="993" y2="289.5" stroke="#6A6A6A" stroke-width="1" stroke-dasharray="3 3"/>
<line x1="52" y1="307.5" x2="993" y2="307.5" stroke="#6A6A6A" stroke-width="1" stroke-dasharray="3 3"/>
<line x1="52" y1="344.5" x2="993" y2="344.5" stroke="#6A6A6A" stroke-width="1" stroke-dasharray="3 3"/>
<line x1="52" y1="349.5" x2="993" y2="349.5" stroke="#6A6A6A" stroke-width="1" stroke-dasharray="3 3"/>
<line x1="52" y1="355.5" x2="993" y2="355.5" stroke="#6A6A6A" stroke-width="1" stroke-dasharray="3 3"/>
<line x1="52" y1="362.5" x2="993" y2="362.5" stroke="#6A6A6A" stroke-width="1" stroke-dasharray="3 3"/>
<line x1="52" y1="371.5" x2="993" y2="371.5" stroke="#6A6A6A" stroke-width="1" stroke-dasharray="3 3"/>
<line x1="52" y1="381.5" x2="993" y2="381.5" stroke="#6A6A6A" stroke-width="1" stroke-dasharray="3 3"/>
<line x1="52" y1="394.5" x2="993" y2="394.5" stroke="#6A6A6A" stroke-width="1" stroke-dasharray="3 3"/>
<line x1="52" y1="412.5" x2="993" y2="412.5" stroke="#6A6A6A" stroke-width="1" stroke-dasharray="3 3"/>
<line x1="52" y1="449.5" x2="993" y2="449.5" stroke="#6A6A6A" stroke-width="1" stroke-dasharray="3 3"/>
<line x1="52" y1="454.5" x2="993" y2="454.5" stroke="#6A6A6A" stroke-width="1" stroke-dasharray="3 3"/>
<line x1="52" y1="460.5" x2="993" y2="460.5" stroke="#6A6A6A" stroke-width="1" stroke-dasharray="3 3"/>
<line x1="52" y1="467.5" x2="993" y2="467.5" stroke="#6A6A6A" stroke-width="1" stroke-dasharray="3 3"/>
<line x1="52" y1="476.5" x2="993" y2="476.5" stroke="#6A6A6A" stroke-width="1" stroke-dasharray="3 3"/>
<line x1="52" y1="486.5" x2="993" y2="486.5" stroke="#6A6A6A" stroke-width="1" stroke-dasharray="3 3"/>
<line x1="52" y1="499.5" x2="993" y2="499.5" stroke="#6A6A6A" stroke-width="1" stroke-dasharray="3 3"/>
<line x1="52" y1="518.5" x2="993" y2="518.5" stroke="#6A6A6A" stroke-width="1" stroke-dasharray="3 3"/>
<line x1="52" y1="554.5" x2="993" y2="554.5" stroke="#6A6A6A" stroke-width="1" stroke-dasharray="3 3"/>
<line x1="52" y1="559.5" x2="993" y2="559.5" stroke="#6A6A6A" stroke-width="1" stroke-dasharray="3 3"/>
<line x1="52" y1="566.5" x2="993" y2="566.5" stroke="#6A6A6A" stroke-width="1" stroke-dasharray="3 3"/>
<line x1="52" y1="573.5" x2="993" y2="573.5" stroke="#6A6A6A" stroke-width="1" stroke-dasharray="3 3"/>
<line x1="52" y1="581.5" x2="993" y2="581.5" stroke="#6A6A6A" stroke-width="1" stroke-dasharray="3 3"/>
<line x1="52" y1="591.5" x2="993" y2="591.5" stroke="#6A6A6A" stroke-width="1" stroke-dasharray="3 3"/>
<line x1="52" y1="604.5" x2="993" y2="604.5" stroke="#6A6A6A" stroke-width="1" stroke-dasharray="3 3"/>
<line x1="52" y1="623.5" x2="993" y2="623.5" stroke="#6A6A6A" stroke-width="1" stroke-dasharray="3 3"/>
<line x1="52" y1="234.5" x2="993" y2="234.5" stroke="#6A6A6A" stroke-width="1" stroke-dasharray="3 3"/>
<line x1="52" y1="339.5" x2="993" y2="339.5" stroke="#6A6A6A" stroke-width="1" stroke-dasharray="3 3"/>
<line x1="52" y1="444.5" x2="993" y2="444.5" stroke="#6A6A6A" stroke-width="1" stroke-dasharray="3 3"/>
<line x1="52" y1="549.5" x2="993" y2="549.5" stroke="#6A6A6A" stroke-width="1" stroke-dasharray="3 3"/>
<line x1="100.5" y1="130" x2="100.5" y2="655" stroke="#6A6A6A" stroke-width="1" stroke-dasharray="3 3"/>
<line x1="150.5" y1="130" x2="150.5" y2="655" stroke="#6A6A6A" stroke-width="1" stroke-dasharray="3 3"/>
<line x1="199.5" y1="130" x2="199.5" y2="655" stroke="#6A6A6A" stroke-width="1" stroke-dasharray="3 3"/>
<line x1="249.5" y1="130" x2="249.5" y2="655" stroke="#6A6A6A" stroke-width="1" stroke-dasharray="3 3"/>
<line x1="298.5" y1="130" x2="298.5" y2="655" stroke="#6A6A6A" stroke-width="1" stroke-dasharray="3 3"/>
<line x1="348.5" y1="130" x2="348.5" y2="655" stroke="#6A6A6A" stroke-width="1" stroke-dasharray="3 3"/>
<line x1="398.5" y1="130" x2="398.5" y2="655" stroke="#6A6A6A" stroke-width="1" stroke-dasharray="3 3"/>
<line x1="447.5" y1="130" x2="447.5" y2="655" stroke="#6A6A6A" stroke-width="1" stroke-dasharray="3 3"/>
<line x1="497.5" y1="130" x2="497.5" y2="655" stroke="#6A6A6A" stroke-width="1" stroke-dasharray="3 3"/>
<line x1="546.5" y1="130" x2="546.5" y2="655" stroke="#6A6A6A" stroke-width="1" stroke-dasharray="3 3"/>
<line x1="596.5" y1="130" x2="596.5" y2="655" stroke="#6A6A6A" stroke-width="1" stroke-dasharray="3 3"/>
<line x1="645.5" y1="130" x2="645.5" y2="655" stroke="#6A6A6A" stroke-width="1" stroke-dasharray="3 3"/>
<line x1="695.5" y1="130" x2="695.5" y2="655" stroke="#6A6A6A" stroke-width="1" stroke-dasharray="3 3"/>
<line x1="745.5" y1="130" x2="745.5" y2="655" stroke="#6A6A6A" stroke-width="1" stroke-dasharray="3 3"/>
<line x1="794.5" y1="130" x2="794.5" y2="655" stroke="#6A6A6A" stroke-width="1" stroke-dasharray="3 3"/>
<line x1="844.5" y1="130" x2="844.5" y2="655" stroke="#6A6A6A" stroke-width="1" stroke-dasharray="3 3"/>
<line x1="893.5" y1="130" x2="893.5" y2="655" stroke="#6A6A6A" stroke-width="1" stroke-dasharray="3 3"/>
<line x1="943.5" y1="130" x2="943.5" y2="655" stroke="#6A6A6A" stroke-width="1" stroke-dasharray="3 3"/>
<line x1="51" y1="129.5" x2="994" y2="129.5" stroke="#7A7A7A"/>
<line x1="51" y1="655.5" x2="994" y2="655.5" stroke="#7A7A7A"/>
<line x1="51.5" y1="129" x2="51.5" y2="656" stroke="#7A7A7A"/>
<line x1="993.5" y1="129" x2="993.5" y2="656" stroke="#7A7A7A"/>
<rect x="100" y="305" width="1" height="350" fill="#f00"/>
<rect x="98" y="300" width="4" height="4" fill="#fff"/>
<path d="M99 299h2v1h-2z M98 300h1v1h-1z M101 300h1v1h-1z M97 301h1v2h-1z M102 301h1v2h-1z M98 303h1v1h-1z M101 303h1v1h-1z M99 304h2v1h-2z" fill="#f00"/>
<rect x="150" y="269" width="1" height="386" fill="#f00"/>
<rect x="148" y="264" width="4" height="4" fill="#fff"/>
<path d="M149 263h2v1h-2z M148 264h1v1h-1z M151 264h1v1h-1z M147 265h1v2h-1z M152 265h1v2h-1z M148 267h1v1h-1z M151 267h1v1h-1z M149 268h2v1h-2z" fill="#f00"/>
<rect x="199" y="366" width="1" height="289" fill="#f00"/>
<rect x="197" y="361" width="4" height="4" fill="#fff"/>
<path d="M198 360h2v1h-2z M197 361h1v1h-1z M200 361h1v1h-1z M196 362h1v2h-1z M201 362h1v2h-1z M197 364h1v1h-1z M200 364h1v1h-1z M198 365h2v1h-2z" fill="#f00"/>
<rect x="249" y="349" width="1" height="306" fill="#f00"/>
<rect x="247" y="344" width="4" height="4" fill="#fff"/>
<path d="M248 343h2v1h-2z M247 344h1v1h-1z M250 344h1v1h-1z M246 345h1v2h-1z M251 345h1v2h-1z M247 347h1v1h-1z M250 347h1v1h-1z M248 348h2v1h-2z" fill="#f00"/>
<rect x="298" y="421" width="1" height="234" fill="#f00"/>
<rect x="296" y="416" width="4" height="4" fill="#fff"/>
<path d="M297 415h2v1h-2z M296 416h1v1h-1z M299 416h1v1h-1z M295 417h1v2h-1z M300 417h1v2h-1z M296 419h1v1h-1z M299 419h1v1h-1z M297 420h2v1h-2z" fill="#f00"/>
<rect x="348" y="381" width="1" height="274" fill="#f00"/>
<rect x="346" y="376" width="4" height="4" fill="#fff"/>
<path d="M347 375h2v1h-2z M346 376h1v1h-1z M349 376h1v1h-1z M345 377h1v2h-1z M350 377h1v2h-1z M346 379h1v1h-1z M349 379h1v1h-1z M347 380h2v1h-2z" fill="#f00"/>
<rect x="398" y="481" width="1" height="174" fill="#f00"/>
<rect x="396" y="476" width="4" height="4" fill="#fff"/>
<path d="M397 475h2v1h-2z M396 476h1v1h-1z M399 476h1v1h-1z M395 477h1v2h-1z M400 477h1v2h-1z M396 479h1v1h-1z M399 479h1v1h-1z M397 480h2v1h-2z" fill="#f00"/>
<rect x="447" y="425" width="1" height="230" fill="#f00"/>
<rect x="445" y="420" width="4" height="4" fill="#fff"/>
<path d="M446 419h2v1h-2z M445 420h1v1h-1z M448 420h1v1h-1z M444 421h1v2h-1z M449 421h1v2h-1z M445 423h1v1h-1z M448 423h1v1h-1z M446 424h2v1h-2z" fill="#f00"/>
<rect x="497" y="531" width="1" height="124" fill="#f00"/>
<rect x="495" y="526" width="4" height="4" fill="#fff"/>
<path d="M496 525h2v1h-2z M495 526h1v1h-1z M498 526h1v1h-1z M494 527h1v2h-1z M499 527h1v2h-1z M495 529h1v1h-1z M498 529h1v1h-1z M496 530h2v1h-2z" fill="#f00"/>
<rect x="546" y="484" width="1" height="171" fill="#f00"/>
<rect x="544" y="479" width="4" height="4" fill="#fff"/>
<path d="M545 478h2v1h-2z M544 479h1v1h-1z M547 479h1v1h-1z M543 480h1v2h-1z M548 480h1v2h-1z M544 482h1v1h-1z M547 482h1v1h-1z M545 483h2v1h-2z" fill="#f00"/>
<rect x="596" y="497" width="1" height="158" fill="#f00"/>
<rect x="594" y="492" width="4" height="4" fill="#fff"/>
<path d="M595 491h2v1h-2z M594 492h1v1h-1z M597 492h1v1h-1z M593 493h1v2h-1z M598 493h1v2h-1z M594 495h1v1h-1z M597 495h1v1h-1z M595 496h2v1h-2z" fill="#f00"/>
<rect x="645" y="500" width="1" height="155" fill="#f00"/>
<rect x="643" y="495" width="4" height="4" fill="#fff"/>
<path d="M644 494h2v1h-2z M643 495h1v1h-1z M646 495h1v1h-1z M642 496h1v2h-1z M647 496h1v2h-1z M643 498h1v1h-1z M646 498h1v1h-1z M644 499h2v1h-2z" fill="#f00"/>
<rect x="695" y="508" width="1" height="147" fill="#f00"/>
<rect x="693" y="503" width="4" height="4" fill="#fff"/>
<path d="M694 502h2v1h-2z M693 503h1v1h-1z M696 503h1v1h-1z M692 504h1v2h-1z M697 504h1v2h-1z M693 506h1v1h-1z M696 506h1v1h-1z M694 507h2v1h-2z" fill="#f00"/>
<rect x="745" y="496" width="1" height="159" fill="#f00"/>
<rect x="743" y="491" width="4" height="4" fill="#fff"/>
<path d="M744 490h2v1h-2z M743 491h1v1h-1z M746 491h1v1h-1z M742 492h1v2h-1z M747 492h1v2h-1z M743 494h1v1h-1z M746 494h1v1h-1z M744 495h2v1h-2z" fill="#f00"/>
<rect x="794" y="549" width="1" height="106" fill="#f00"/>
<rect x="792" y="544" width="4" height="4" fill="#fff"/>
<path d="M793 543h2v1h-2z M792 544h1v1h-1z M795 544h1v1h-1z M791 545h1v2h-1z M796 545h1v2h-1z M792 547h1v1h-1z M795 547h1v1h-1z M793 548h2v1h-2z" fill="#f00"/>
<rect x="844" y="510" width="1" height="145" fill="#f00"/>
<rect x="842" y="505" width="4" height="4" fill="#fff"/>
<path d="M843 504h2v1h-2z M842 505h1v1h-1z M845 505h1v1h-1z M841 506h1v2h-1z M846 506h1v2h-1z M842 508h1v1h-1z M845 508h1v1h-1z M843 509h2v1h-2z" fill="#f00"/>
<rect x="893" y="541" width="1" height="114" fill="#f00"/>
<rect x="891" y="536" width="4" height="4" fill="#fff"/>
<path d="M892 535h2v1h-2z M891 536h1v1h-1z M894 536h1v1h-1z M890 537h1v2h-1z M895 537h1v2h-1z M891 539h1v1h-1z M894 539h1v1h-1z M892 540h2v1h-2z" fill="#f00"/>
<rect x="943" y="533" width="1" height="122" fill="#f00"/>
<rect x="941" y="528" width="4" height="4" fill="#fff"/>
<path d="M942 527h2v1h-2z M941 528h1v1h-1z M944 528h1v1h-1z M940 529h1v2h-1z M945 529h1v2h-1z M941 531h1v1h-1z M944 531h1v1h-1z M942 532h2v1h-2z" fill="#f00"/>
<rect x="993" y="515" width="1" height="140" fill="#f00"/>
<rect x="991" y="510" width="4" height="4" fill="#fff"/>
<path d="M992 509h2v1h-2z M991 510h1v1h-1z M994 510h1v1h-1z M990 511h1v2h-1z M995 511h1v2h-1z M991 513h1v1h-1z M994 513h1v1h-1z M992 514h2v1h-2z" fill="#f00"/>
</svg>
<div class="t" style="left:7px;top:123.5px;font-size:12.4px;color:#00f;letter-spacing:0.5px">1000m</div>
<div class="t" style="left:7px;top:228.7px;font-size:12.4px;color:#00f;letter-spacing:0.5px">100m</div>
<div class="t" style="left:7px;top:333.9px;font-size:12.4px;color:#00f;letter-spacing:0.5px">10m</div>
<div class="t" style="left:7px;top:439.1px;font-size:12.4px;color:#00f;letter-spacing:0.5px">1m</div>
<div class="t" style="left:7px;top:544.3px;font-size:12.4px;color:#00f;letter-spacing:0.5px">100u</div>
<div class="t" style="left:7px;top:649.5px;font-size:12.4px;color:#00f;letter-spacing:0.5px">10u</div>
<div class="t" style="left:51px;top:658px;font-size:12.4px;color:#00f">1.000K</div>
<div class="t" style="left:40px;width:120px;text-align:center;top:658px;font-size:12.4px;color:#00f">2.000K</div>
<div class="t" style="left:90px;width:120px;text-align:center;top:658px;font-size:12.4px;color:#00f">3.000K</div>
<div class="t" style="left:139px;width:120px;text-align:center;top:658px;font-size:12.4px;color:#00f">4.000K</div>
<div class="t" style="left:189px;width:120px;text-align:center;top:658px;font-size:12.4px;color:#00f">5.000K</div>
<div class="t" style="left:238px;width:120px;text-align:center;top:658px;font-size:12.4px;color:#00f">6.000K</div>
<div class="t" style="left:288px;width:120px;text-align:center;top:658px;font-size:12.4px;color:#00f">7.000K</div>
<div class="t" style="left:338px;width:120px;text-align:center;top:658px;font-size:12.4px;color:#00f">8.000K</div>
<div class="t" style="left:387px;width:120px;text-align:center;top:658px;font-size:12.4px;color:#00f">9.000K</div>
<div class="t" style="left:437px;width:120px;text-align:center;top:658px;font-size:12.4px;color:#00f">10.000K</div>
<div class="t" style="left:486px;width:120px;text-align:center;top:658px;font-size:12.4px;color:#00f">11.000K</div>
<div class="t" style="left:536px;width:120px;text-align:center;top:658px;font-size:12.4px;color:#00f">12.000K</div>
<div class="t" style="left:585px;width:120px;text-align:center;top:658px;font-size:12.4px;color:#00f">13.000K</div>
<div class="t" style="left:635px;width:120px;text-align:center;top:658px;font-size:12.4px;color:#00f">14.000K</div>
<div class="t" style="left:685px;width:120px;text-align:center;top:658px;font-size:12.4px;color:#00f">15.000K</div>
<div class="t" style="left:734px;width:120px;text-align:center;top:658px;font-size:12.4px;color:#00f">16.000K</div>
<div class="t" style="left:784px;width:120px;text-align:center;top:658px;font-size:12.4px;color:#00f">17.000K</div>
<div class="t" style="left:833px;width:120px;text-align:center;top:658px;font-size:12.4px;color:#00f">18.000K</div>
<div class="t" style="left:883px;width:120px;text-align:center;top:658px;font-size:12.4px;color:#00f">19.000K</div>
<div class="t" style="left:933px;width:120px;text-align:center;top:658px;font-size:12.4px;color:#00f">20.000K</div>
<div class="t" style="left:51px;top:673px;font-size:11.9px;color:#f00;text-decoration:underline">IHD(HARM(v(out)))</div>
<div class="t" style="left:460px;top:688px;font-size:12.4px;color:#00f">f</div>
<div class="t" style="left:478px;top:116px;font-size:12.2px;color:#00f">SOUOZ110.CIR</div>
<div class="ab" style="left:364px;top:158px;width:386px;height:220px;background:#D4D0C8;border:1px solid;border-color:#D4D0C8 #404040 #404040 #D4D0C8"></div>
<div class="ab" style="left:365px;top:159px;width:384px;height:218px;border:1px solid;border-color:#fff #808080 #808080 #fff"></div>
<div class="ab" style="left:367px;top:161px;width:380px;height:23px;background:linear-gradient(to right,#0A246A,#A6CAF0)"></div>
<div class="t" style="left:369px;top:166.15px;font-size:14px;color:#fff;font-weight:bold;letter-spacing:0.15px">DSP Parameters</div>
<div class="ab raised" style="left:724px;top:163px;width:21px;height:19px;background:#D4D0C8"></div><svg style="left:729px;top:167px" width="12" height="11"><path d="M1 1L9 9M9 1L1 9" stroke="#000" stroke-width="2.2"/></svg>
<div class="t" style="left:391.5px;top:216.57px;font-size:13.5px;color:#000;">Upper Time Limit</div>
<div class="t" style="left:391.5px;top:256.57px;font-size:13.5px;color:#000;">Lower Time Limit</div>
<div class="t" style="left:391.5px;top:296.57px;font-size:13.5px;color:#000;">Number of Points</div>
<div class="ab" style="left:527px;top:210px;width:64px;height:25px;background:#fff;border:2px solid;border-color:#808080 #fff #fff #808080;box-shadow:inset 1px 1px #404040, 1px 1px #D4D0C8"></div>
<div class="t" style="left:531px;top:216.00px;font-size:13px;color:#000;">4m</div>
<div class="ab" style="left:527px;top:251px;width:64px;height:25px;background:#fff;border:2px solid;border-color:#808080 #fff #fff #808080;box-shadow:inset 1px 1px #404040, 1px 1px #D4D0C8"></div>
<div class="t" style="left:531px;top:257.00px;font-size:13px;color:#000;">3m</div>
<div class="ab" style="left:527px;top:291px;width:64px;height:24px;background:#fff;border:2px solid;border-color:#808080 #fff #fff #808080;box-shadow:inset 1px 1px #404040, 1px 1px #D4D0C8"></div>
<div class="t" style="left:531px;top:297.00px;font-size:13px;color:#000;">4096</div>
<div class="ab" style="left:617px;top:217px;width:115px;height:93px;border:1px solid;border-color:#808080 #fff #fff #808080;box-shadow:inset 1px 1px #fff, 1px 1px #808080"></div>
<div class="ab" style="left:626px;top:210px;width:40px;height:14px;background:#D4D0C8"></div>
<div class="t" style="left:628px;top:210.57px;font-size:13.5px;color:#000;">Status</div>
<svg style="left:638.5px;top:239.5px" width="13" height="13" viewBox="0 0 13 13"><circle cx="6.5" cy="6.5" r="6" fill="#fff"/><path d="M0.8 8.5A6 6 0 0 1 8.5 0.8" fill="none" stroke="#808080" stroke-width="1.2"/><path d="M1.9 8.2A4.8 4.8 0 0 1 8.2 1.9" fill="none" stroke="#404040" stroke-width="1.2"/><path d="M10.6 3.2A5 5 0 0 1 3.2 10.6" fill="none" stroke="#D4D0C8" stroke-width="1.2"/><circle cx="6.5" cy="6.5" r="2.6" fill="#000"/></svg>
<svg style="left:638.5px;top:274.5px" width="13" height="13" viewBox="0 0 13 13"><circle cx="6.5" cy="6.5" r="6" fill="#fff"/><path d="M0.8 8.5A6 6 0 0 1 8.5 0.8" fill="none" stroke="#808080" stroke-width="1.2"/><path d="M1.9 8.2A4.8 4.8 0 0 1 8.2 1.9" fill="none" stroke="#404040" stroke-width="1.2"/><path d="M10.6 3.2A5 5 0 0 1 3.2 10.6" fill="none" stroke="#D4D0C8" stroke-width="1.2"/></svg>
<div class="t" style="left:658px;top:239.57px;font-size:13.5px;color:#000;">On</div>
<div class="t" style="left:658px;top:273.57px;font-size:13.5px;color:#000;">Off</div>
<div class="ab" style="left:399px;top:333px;width:84px;height:28px;border:1px solid #000"></div>
<div class="ab" style="left:400px;top:334px;width:82px;height:26px;background:#D4D0C8;border:1px solid;border-color:#fff #404040 #404040 #fff;box-shadow:inset -1px -1px #808080"></div>
<div class="ab" style="left:515px;top:333px;width:84px;height:28px;background:#D4D0C8;border:1px solid;border-color:#fff #404040 #404040 #fff;box-shadow:inset -1px -1px #808080"></div>
<div class="ab" style="left:631px;top:333px;width:84px;height:28px;background:#D4D0C8;border:1px solid;border-color:#fff #404040 #404040 #fff;box-shadow:inset -1px -1px #808080"></div>
<div class="t" style="left:431px;top:339.57px;font-size:13.5px;color:#000;">OK</div>
<div class="t" style="left:537px;top:339.57px;font-size:13.5px;color:#000;">Cancel</div>
<div class="t" style="left:654px;top:339.57px;font-size:13.5px;color:#000;">Help...</div>
<svg style="left:0;top:0" width="1025" height="768"><ellipse cx="560" cy="223.8" rx="48.3" ry="18.5" fill="none" stroke="#f00" stroke-width="1.2"/><ellipse cx="559.2" cy="267.3" rx="47.3" ry="20.3" fill="none" stroke="#f00" stroke-width="1.2"/></svg>
<div class="ab" style="left:513px;top:247px;width:2px;height:16px;background:#000"></div>
<div class="ab" style="left:3px;top:711px;width:126px;height:18px;border:1px solid;border-color:#808080 #fff #fff #808080"></div>
<div class="t" style="left:5px;top:714px;font-size:13px;color:#000">Scale Mode</div>
<div class="ab" style="left:130px;top:711px;width:874px;height:18px;border:1px solid;border-color:#808080 #fff #fff #808080"></div>
<svg class="ab" style="left:1010px;top:715px" width="13" height="13"><path d="M12 1L1 12M12 5L5 12M12 9L9 12" stroke="#808080" stroke-width="1.5"/></svg>
<div class="ab" style="left:0;top:731px;width:1025px;height:1px;background:#505050"></div>
<div class="ab" style="left:0;top:732px;width:1025px;height:1px;background:#404040"></div>
<div class="ab" style="left:0;top:735px;width:1025px;height:1px;background:#fff"></div>
<div class="ab" style="left:2px;top:738px;width:61px;height:26px;background:#D4D0C8;border:1px solid;border-color:#fff #404040 #404040 #fff;box-shadow:inset -1px -1px #808080"></div>
<svg style="left:4px;top:741px" width="20" height="19" viewBox="0 0 20 19">
<path d="M3 2 Q6 0 10 2 L9 8 Q6 6 2 8 Z" fill="#F26A2A"/>
<path d="M11 3 Q14 1 18 3 L17 9 Q14 7 10 9 Z" fill="#6CC62E"/>
<path d="M2 9 Q5 7 9 9 L8 15 Q5 13 1 15 Z" fill="#3C7CE0"/>
<path d="M10 10 Q13 8 17 10 L16 16 Q13 14 9 16 Z" fill="#F2C21A"/>
</svg>
<div class="t" style="left:26px;top:744.57px;font-size:13.5px;color:#000;font-weight:bold">Пуск</div>
<div class="ab" style="left:68px;top:738px;width:150px;height:26px;background:#EAE8E4;border:1px solid;border-color:#404040 #fff #fff #404040;box-shadow:inset 1px 1px #808080"></div>
<svg class="ab" style="left:73px;top:742px" width="20" height="20" viewBox="0 0 20 20">
<rect x="0" y="0" width="20" height="20" fill="#000"/>
<polygon points="1,3 9,1 10,6 2,8" fill="#f00"/>
<polygon points="9,2 17,1 19,10 11,7" fill="#080"/>
<polygon points="1,8 9,7 8,18 3,17" fill="#00f"/>
<polygon points="11,7 19,12 18,19 8,19" fill="#ff0"/>
<polygon points="5,7 14,7 14,10 11,17 7,17 10,10 5,10" fill="#fff"/>
</svg>
<div class="t" style="left:96px;top:745.15px;font-size:14px;color:#000;letter-spacing:0.75px;-webkit-text-stroke:0.35px #000">Micro-Cap 7.1....</div>
<div class="ab" style="left:222px;top:738px;width:150px;height:26px;background:#D4D0C8;border:1px solid;border-color:#fff #404040 #404040 #fff;box-shadow:inset -1px -1px #808080"></div>
<svg style="left:227px;top:741px" width="18" height="18" viewBox="0 0 18 18">
<rect x="0.5" y="0.5" width="17" height="17" fill="#fff" stroke="#404040"/>
<rect x="1" y="1" width="16" height="2" fill="#808080"/>
<rect x="2" y="5" width="2" height="11" fill="#c04040"/>
<path d="M6 6h3M11 6h3M6 9h3M11 9h3M6 12h3M11 12h3M6 15h3M11 15h3" stroke="#606060"/>
</svg>
<div class="t" style="left:249px;top:745.57px;font-size:13.5px;color:#000;">Transient Analysis...</div>
<div class="ab" style="left:376px;top:738px;width:150px;height:26px;background:#D4D0C8;border:1px solid;border-color:#fff #404040 #404040 #fff;box-shadow:inset -1px -1px #808080"></div>
<svg style="left:381px;top:741px" width="18" height="18" viewBox="0 0 18 18">
<path d="M3 3 L8 17 L13 17 L16 3 Z" fill="#e0e0e0" stroke="#808080"/>
<path d="M5 4 L9 16" stroke="#f00" stroke-width="2"/><path d="M8 3 L11 16" stroke="#0a0" stroke-width="2"/><path d="M11 3 L12 16" stroke="#00f" stroke-width="2"/><path d="M14 3 L13 15" stroke="#fc0" stroke-width="2"/>
<path d="M4 1 L7 5" stroke="#806040" stroke-width="2"/>
</svg>
<div class="t" style="left:403px;top:745.57px;font-size:13.5px;color:#000;">Окно9.GIF - Paint</div>
<div class="ab" style="left:530px;top:738px;width:150px;height:26px;background:#D4D0C8;border:1px solid;border-color:#fff #404040 #404040 #fff;box-shadow:inset -1px -1px #808080"></div>
<svg style="left:535px;top:742px" width="19" height="16" viewBox="0 0 19 16">
<path d="M1 2h6l2 2h8v11H1z" fill="#F8D878" stroke="#A08020"/>
<path d="M1 6h17l-1 9H1z" fill="#FCE8A0" stroke="#A08020"/>
</svg>
<div class="t" style="left:557px;top:745.57px;font-size:13.5px;color:#000;">Статья про МС</div>
<div class="ab" style="left:684px;top:738px;width:150px;height:26px;background:#D4D0C8;border:1px solid;border-color:#fff #404040 #404040 #fff;box-shadow:inset -1px -1px #808080"></div>
<svg style="left:689px;top:741px" width="18" height="18" viewBox="0 0 18 18">
<rect x="3.5" y="1.5" width="13" height="15" fill="#fff" stroke="#404040"/>
<rect x="1" y="4" width="12" height="11" fill="#1A3A9A"/>
<text x="2" y="14" font-size="11" font-weight="bold" fill="#fff" font-family="Liberation Serif">W</text>
</svg>
<div class="t" style="left:711px;top:745.57px;font-size:13.5px;color:#000;">Особенности сх...</div>
<div class="ab" style="left:846px;top:742px;width:21px;height:20px;background:#0A246A"></div>
<div class="t" style="left:847px;top:745.57px;font-size:13.5px;color:#fff;">RU</div>
<div class="ab" style="left:870px;top:738px;width:1px;height:26px;background:#808080"></div>
<div class="ab" style="left:871px;top:738px;width:1px;height:26px;background:#fff"></div>
<div class="ab" style="left:877px;top:738px;width:144px;height:27px;border:1px solid;border-color:#808080 #fff #fff #808080"></div>
<svg style="left:880px;top:742px" width="18" height="18" viewBox="0 0 18 18">
<rect x="1" y="7" width="10" height="8" fill="#3050A0" stroke="#202060"/>
<rect x="6" y="2" width="10" height="8" fill="#4060B0" stroke="#202060"/>
<path d="M2 15 Q8 17 14 12" stroke="#B0B8E0" fill="none" stroke-width="2"/>
</svg>
<svg style="left:902px;top:742px" width="19" height="18" viewBox="0 0 19 18">
<circle cx="8" cy="8" r="7" fill="#808080" stroke="#404040"/>
<circle cx="8" cy="8" r="3.5" fill="#B0B0B0"/>
<path d="M12 13 L17 16 M14 12 L17 14" stroke="#8080F0" stroke-width="1.5"/>
</svg>
<svg style="left:924px;top:742px" width="20" height="18" viewBox="0 0 20 18">
<path d="M2 2 Q0 5 3 7 Q0 10 3 13 Q2 16 5 17" stroke="#000" fill="none" stroke-width="1.5"/>
<rect x="8" y="3" width="10" height="13" fill="#fff" stroke="#000"/>
<circle cx="13" cy="10" r="3" fill="#ff0" stroke="#000"/>
<rect x="5" y="5" width="3" height="9" fill="#e0e0e0" stroke="#000"/>
</svg>
<svg style="left:946px;top:741px" width="20" height="19" viewBox="0 0 20 19">
<path d="M1 10 L9 2 L19 10 L11 18 Z" fill="#F0E000" stroke="#606000"/>
<path d="M4 10 L9 5 L12 8 L7 13 Z" fill="#fff" stroke="#808000"/>
<circle cx="12" cy="9" r="1.5" fill="#20f"/>
</svg>
<div class="t" style="left:977px;top:745.15px;font-size:14px;color:#000;">11:32</div>
<div class="ab" style="left:1024px;top:0;width:1px;height:768px;background:#fff"></div>
</body></html>
